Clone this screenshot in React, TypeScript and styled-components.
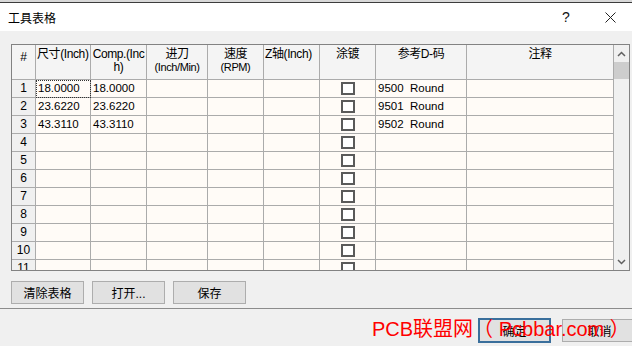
import styled, { createGlobalStyle, css } from "styled-components";

const GlobalStyle = createGlobalStyle`
  html, body {
    margin: 0;
    padding: 0;
    background: #f0f0f0;
  }
  * {
    box-sizing: border-box;
  }
`;

const FONT = `"Liberation Sans", "Noto Sans CJK SC", sans-serif`;

const COLS = [24, 55, 56, 61, 56, 56, 56, 91, 147];
const GRID_COLS = COLS.map((w) => `${w}px`).join(" ");

const Window = styled.div`
  position: relative;
  width: 632px;
  height: 346px;
  overflow: hidden;
  background: #f0f0f0;
  font-family: ${FONT};
  color: #000;
`;

const TopEdge = styled.div`
  height: 3px;
  background: #d8d8d8;
  border-bottom: 1px solid #3c3c3c;
`;

const TitleBar = styled.div`
  height: 28px;
  background: #fff;
  display: flex;
  align-items: center;
  padding-left: 8px;
`;

const Title = styled.div`
  font-size: 12px;
  flex: 1;
`;

const TitleButton = styled.div`
  width: 44px;
  height: 28px;
  display: flex;
  align-items: center;
  justify-content: center;
  font-size: 14px;
  color: #111;
`;

const Body = styled.div`
  height: 277px;
  padding: 13px 0 0 11px;
`;

const Table = styled.div`
  width: 619px;
  height: 227px;
  border: 1px solid #828282;
  display: flex;
  background: #fffbf7;
`;

const TableMain = styled.div`
  width: 602px;
  display: flex;
  flex-direction: column;
`;

const HeaderRow = styled.div`
  display: grid;
  grid-template-columns: ${GRID_COLS};
  height: 35px;
`;

const HeadCell = styled.div<{ $align?: "left" | "center"; $top?: number }>`
  background: #f4f4f4;
  border-right: 1px solid #ababab;
  border-bottom: 1px solid #ababab;
  font-size: 12px;
  line-height: 13px;
  letter-spacing: -0.4px;
  padding: ${(p) => p.$top ?? 3}px 1px 0;
  text-align: ${(p) => p.$align ?? "center"};
  white-space: nowrap;
  overflow: hidden;
`;

const Small = styled.span`
  font-size: 11px;
`;

const RowsViewport = styled.div`
  height: 190px;
  overflow: hidden;
`;

const Row = styled.div`
  display: grid;
  grid-template-columns: ${GRID_COLS};
  height: 18px;
`;

const Cell = styled.div<{ $focus?: boolean }>`
  border-right: 1px solid #ababab;
  border-bottom: 1px solid #ababab;
  font-size: 11.5px;
  line-height: 17px;
  padding-left: 2px;
  white-space: pre;
  overflow: hidden;
  ${(p) =>
    p.$focus &&
    css`
      outline: 1px dotted #333;
      outline-offset: -1px;
    `}
`;

const NumCell = styled(Cell)`
  background: #f0f0f0;
  text-align: center;
  padding-left: 0;
  font-size: 12px;
`;

const CheckCell = styled(Cell)`
  display: flex;
  justify-content: center;
  padding: 2px 0 0;
`;

const CheckBox = styled.div`
  width: 14px;
  height: 13px;
  border: 2px solid #5a5a5a;
  background: #fff;
`;

const ScrollBar = styled.div`
  width: 15px;
  background: #f0f0f0;
  display: flex;
  flex-direction: column;
`;

const ScrollArrow = styled.div`
  height: 17px;
  display: flex;
  align-items: center;
  justify-content: center;
`;

const Thumb = styled.div`
  height: 17px;
  background: #cdcdcd;
`;

const Track = styled.div`
  flex: 1;
`;

const ButtonRow = styled.div`
  display: flex;
  gap: 8px;
  margin-top: 9px;
`;

const Button = styled.div<{ $primary?: boolean; $w?: number }>`
  width: ${(p) => p.$w ?? 73}px;
  height: ${(p) => (p.$primary ? 25 : 23)}px;
  border: ${(p) => (p.$primary ? "2px solid #3a6f9c" : "1px solid #adadad")};
  background: #e1e1e1;
  font-size: 12px;
  display: flex;
  align-items: center;
  justify-content: center;
  flex-shrink: 0;
  margin-top: ${(p) => (p.$primary ? 0 : 1)}px;
`;

const Footer = styled.div`
  height: 38px;
  border-top: 1px solid #8c8c8c;
  display: flex;
  align-items: flex-start;
  gap: 11px;
  padding: 9px 0 0 478px;
`;

const Watermark = styled.div`
  position: absolute;
  left: 372px;
  top: 319px;
  font-size: 20px;
  line-height: 20px;
  color: #ff0000;
  white-space: nowrap;
  pointer-events: none;
`;

const Chevron = ({ down }: { down?: boolean }) => (
  <svg width="9" height="6" viewBox="0 0 9 6">
    <polyline
      points={down ? "1,1 4.5,4.5 8,1" : "1,5 4.5,1.5 8,5"}
      fill="none"
      stroke="#606060"
      strokeWidth="1.5"
    />
  </svg>
);

const data: Record<number, [string, string, string]> = {
  1: ["18.0000", "18.0000", "9500  Round"],
  2: ["23.6220", "23.6220", "9501  Round"],
  3: ["43.3110", "43.3110", "9502  Round"],
};

export default function App() {
  const rows = Array.from({ length: 11 }, (_, i) => i + 1);
  return (
    <Window>
      <GlobalStyle />
      <TopEdge />
      <TitleBar>
        <Title>工具表格</Title>
        <TitleButton>?</TitleButton>
        <TitleButton>
          <svg width="11" height="11" viewBox="0 0 11 11">
            <path d="M0.5 0.5 L10.5 10.5 M10.5 0.5 L0.5 10.5" stroke="#222" strokeWidth="1" />
          </svg>
        </TitleButton>
      </TitleBar>
      <Body>
        <Table>
          <TableMain>
            <HeaderRow>
              <HeadCell $top={6}>#</HeadCell>
              <HeadCell $align="left">尺寸(Inch)</HeadCell>
              <HeadCell>
                Comp.(Inc
                <br />
                h)
              </HeadCell>
              <HeadCell>
                进刀
                <br />
                <Small>(Inch/Min)</Small>
              </HeadCell>
              <HeadCell>
                速度
                <br />
                <Small>(RPM)</Small>
              </HeadCell>
              <HeadCell $align="left">Z轴(Inch)</HeadCell>
              <HeadCell>涂镀</HeadCell>
              <HeadCell>参考D-码</HeadCell>
              <HeadCell>注释</HeadCell>
            </HeaderRow>
            <RowsViewport>
              {rows.map((n) => {
                const d = data[n];
                return (
                  <Row key={n}>
                    <NumCell>{n}</NumCell>
                    <Cell $focus={n === 1}>{d?.[0]}</Cell>
                    <Cell>{d?.[1]}</Cell>
                    <Cell />
                    <Cell />
                    <Cell />
                    <CheckCell>
                      <CheckBox />
                    </CheckCell>
                    <Cell>{d?.[2]}</Cell>
                    <Cell />
                  </Row>
                );
              })}
            </RowsViewport>
          </TableMain>
          <ScrollBar>
            <ScrollArrow>
              <Chevron />
            </ScrollArrow>
            <Thumb />
            <Track />
            <ScrollArrow>
              <Chevron down />
            </ScrollArrow>
          </ScrollBar>
        </Table>
        <ButtonRow>
          <Button>清除表格</Button>
          <Button>打开...</Button>
          <Button>保存</Button>
        </ButtonRow>
      </Body>
      <Footer>
        <Button $primary>确定</Button>
        <Button $w={75}>取消</Button>
      </Footer>
      <Watermark>PCB联盟网（ Pcbbar.com ）</Watermark>
    </Window>
  );
}
